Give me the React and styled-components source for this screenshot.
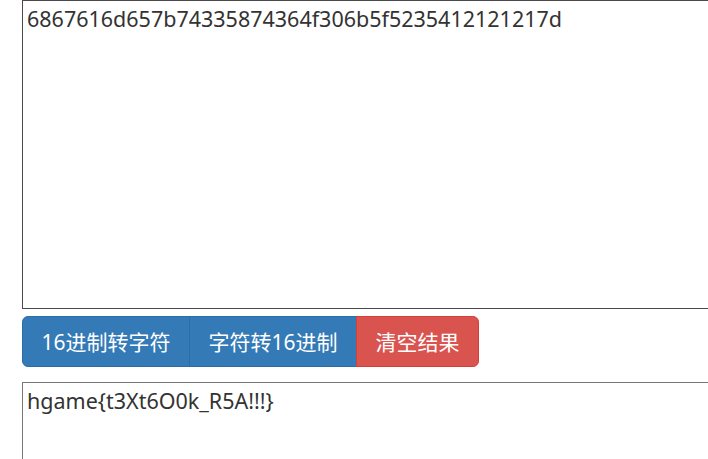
import React, { useState } from 'react';
import styled, { createGlobalStyle } from 'styled-components';

const GlobalStyle = createGlobalStyle`
    html, body {
        margin: 0;
        padding: 0;
        background: #fff;
        overflow: hidden;
    }
    body {
        font-family: "Noto Sans", "Noto Sans CJK SC", sans-serif;
        color: #333;
    }
`;

const Page = styled.div`
    display: flex;
    flex-direction: column;
    padding-left: 22px;
    width: 780px;
`;

const TextBox = styled.textarea`
    display: block;
    box-sizing: border-box;
    width: 100%;
    height: ${({ rows }) => (rows > 5 ? '309px' : '200px')};
    margin: 0;
    padding: 3px 4px;
    border: 1px solid ${({ dark }) => (dark ? '#4a4a4a' : '#767676')};
    border-radius: 0;
    resize: none;
    outline: none;
    font-family: "Noto Sans", "Noto Sans CJK SC", sans-serif;
    font-size: 21.5px;
    line-height: 1.4;
    color: #333;
    background: #fff;
`;

const BtnGroup = styled.div`
    display: flex;
    align-self: flex-start;
    margin: 7px 0 15px;
`;

const Btn = styled.button`
    box-sizing: border-box;
    height: 51px;
    padding: 0 18.5px;
    margin: 0 0 0 -1px;
    border: 1px solid ${({ danger }) => (danger ? '#d43f3a' : '#2e6da4')};
    background: ${({ danger }) => (danger ? '#d9534f' : '#337ab7')};
    color: #fff;
    font-family: "Noto Sans", "Noto Sans CJK SC", sans-serif;
    font-size: 21px;
    line-height: 1.333;
    cursor: pointer;
    white-space: nowrap;

    &:first-child {
        margin-left: 0;
        border-radius: 6px 0 0 6px;
    }
    &:last-child {
        border-radius: 0 6px 6px 0;
    }
`;

const toText = hex => {
    let out = '';
    for (let i = 0; i + 1 < hex.length; i += 2) {
        out += String.fromCharCode(parseInt(hex.substr(i, 2), 16));
    }
    return out;
};

const toHex = str => Array.from(str).map(c => c.charCodeAt(0).toString(16).padStart(2, '0')).join('');

const App = () => {
    const [input, setInput] = useState('6867616d657b74335874364f306b5f5235412121217d');
    const [result, setResult] = useState('hgame{t3Xt6O0k_R5A!!!}');

    return (
        <>
            <GlobalStyle />
            <Page>
                <TextBox rows={10} dark value={input} onChange={e => setInput(e.target.value)} />
                <BtnGroup>
                    <Btn onClick={() => setResult(toText(input))}>16进制转字符</Btn>
                    <Btn onClick={() => setResult(toHex(input))}>字符转16进制</Btn>
                    <Btn danger onClick={() => setResult('')}>清空结果</Btn>
                </BtnGroup>
                <TextBox rows={5} value={result} onChange={e => setResult(e.target.value)} />
            </Page>
        </>
    );
};

export default App;
